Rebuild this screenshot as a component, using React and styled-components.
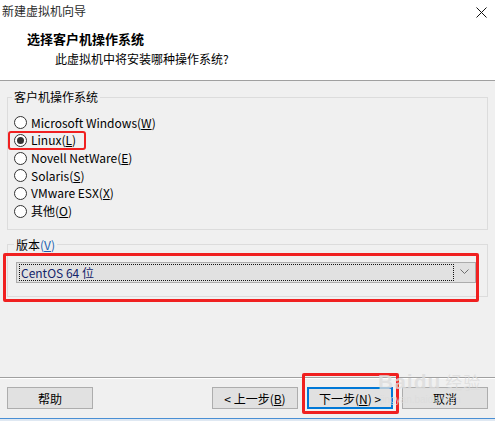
import React from "react";
import styled, { createGlobalStyle } from "styled-components";

const Global = createGlobalStyle`
  html, body { margin: 0; padding: 0; background: #f0f0f0; }
  body { font-family: "Noto Sans CJK SC", "Noto Sans", sans-serif; font-size: 12px; color: #000; }
  * { box-sizing: border-box; }
`;

const Window = styled.div`
  width: 495px;
  height: 421px;
  display: flex;
  flex-direction: column;
  background: #f0f0f0;
  position: relative;
  overflow: hidden;
`;

const Header = styled.div`
  height: 81px;
  background: #fff;
  border-bottom: 1px solid #a0a0a0;
  display: flex;
  flex-direction: column;
`;

const TitleBar = styled.div`
  height: 30px;
  display: flex;
  justify-content: space-between;
  align-items: flex-start;
  padding: 2px 8px 0 2px;
`;

const TitleText = styled.span`
  font-size: 12px;
  line-height: 17px;
  color: #2b2b2b;
`;

const Close = styled.svg`
  margin-top: 5px;
  width: 11px;
  height: 11px;
`;

const HeadTitle = styled.div`
  font-size: 13px;
  font-weight: bold;
  line-height: 18px;
  padding-left: 27px;
`;

const HeadSub = styled.div`
  font-size: 12px;
  line-height: 17px;
  padding-left: 55px;
  margin-top: 2px;
`;

const Content = styled.div`
  padding: 9px 7px 0 7px;
  display: flex;
  flex-direction: column;
  gap: 8px;
`;

const Group = styled.fieldset`
  margin: 0;
  border: 1px solid #dcdcdc;
  padding: ${(p) => p.$pad};
  min-width: 0;
  position: relative;
`;

const Legend = styled.legend`
  font-size: 12px;
  line-height: 14px;
  padding: 0 2px;
  margin-left: -2px;
`;

const Accel = styled.span`
  color: ${(p) => p.$color || "inherit"};
  u { text-decoration: underline; }
`;

const RadioList = styled.div`
  display: flex;
  flex-direction: column;
  align-items: flex-start;
`;

const RadioRow = styled.label`
  display: inline-flex;
  align-items: center;
  gap: 4px;
  height: 17.66px;
  line-height: 16px;
  position: relative;
  ${(p) =>
    p.$mark &&
    `&::after {
      content: "";
      position: absolute;
      left: -6px; right: -10px; top: -1px; bottom: -1px;
      border: 2.5px solid #f02020;
      border-radius: 3px;
    }`}
`;

const RadioDot = styled.span`
  width: 13px;
  height: 13px;
  border-radius: 50%;
  border: 1px solid #333;
  background: #fff;
  display: flex;
  align-items: center;
  justify-content: center;
  &::before {
    content: "";
    width: 7px;
    height: 7px;
    border-radius: 50%;
    background: ${(p) => (p.$on ? "#333" : "transparent")};
  }
`;

const Combo = styled.div`
  height: 21px;
  border: 1px solid #acacac;
  background: #e1e1e1;
  display: flex;
  align-items: center;
  padding: 1px 3px 1px 2px;
  gap: 6px;
`;

const ComboValue = styled.div`
  flex: 1;
  height: 17px;
  border: 1px dotted #111;
  line-height: 15px;
  padding-left: 1px;
  color: #14246a;
`;

const Chevron = styled.svg`
  width: 9px;
  height: 6px;
  margin-right: 3px;
`;

const Mark = styled.div`
  position: absolute;
  left: -5px;
  right: 8px;
  top: 1px;
  bottom: -6px;
  border: 3px solid #f02020;
  border-radius: 2px;
  pointer-events: none;
`;

const Footer = styled.div`
  margin-top: auto;
  border-top: 1px solid #a0a0a0;
  box-shadow: inset 0 1px 0 #fff;
  height: 41px;
  padding: 9px 7px 0 7px;
  display: flex;
  align-items: flex-start;
`;

const Btn = styled.div`
  width: 86px;
  height: 22px;
  background: #e1e1e1;
  border: ${(p) => (p.$primary ? "2px solid #0078d7" : "1px solid #adadad")};
  display: flex;
  align-items: center;
  justify-content: center;
  font-size: 12px;
  margin-left: ${(p) => p.$ml || 0}px;
  position: relative;
  white-space: pre;
  u { text-decoration: underline; }
`;

const BtnMark = styled.div`
  position: absolute;
  left: -7px;
  right: -8px;
  top: -16px;
  bottom: -7px;
  border: 3px solid #f02020;
  border-radius: 2px;
`;

const BottomStrip = styled.div`
  height: 3px;
  border-top: 1px solid #4a8fd4;
  background: #dfe8f2;
`;

const Watermark = styled.div`
  position: absolute;
  left: 378px;
  top: 370px;
  display: flex;
  flex-direction: column;
  align-items: flex-start;
  color: rgba(220, 220, 220, 0.8);
  pointer-events: none;
`;

const WmMain = styled.div`
  font-family: "Liberation Sans", sans-serif;
  font-size: 21px;
  font-weight: bold;
  line-height: 24px;
  letter-spacing: 1px;
  display: flex;
  align-items: center;
  gap: 2px;
`;

const WmSub = styled.div`
  font-family: "Liberation Sans", sans-serif;
  font-size: 10px;
  line-height: 12px;
  margin-left: 2px;
`;

const WmCjk = styled.span`
  font-family: "Noto Sans CJK SC", sans-serif;
  font-size: 17px;
  font-weight: normal;
  margin-left: 2px;
`;

const radios = [
  { pre: "Microsoft Windows(", k: "W" },
  { pre: "Linux(", k: "L", on: true, mark: true },
  { pre: "Novell NetWare(", k: "E" },
  { pre: "Solaris(", k: "S" },
  { pre: "VMware ESX(", k: "X" },
  { pre: "其他(", k: "O" },
];

export default function App() {
  return (
    <>
      <Global />
      <Window>
        <Header>
          <TitleBar>
            <TitleText>新建虚拟机向导</TitleText>
            <Close viewBox="0 0 11 11">
              <path d="M0.5 0.5 L10.5 10.5 M10.5 0.5 L0.5 10.5" stroke="#111" strokeWidth="1" />
            </Close>
          </TitleBar>
          <HeadTitle>选择客户机操作系统</HeadTitle>
          <HeadSub>此虚拟机中将安装哪种操作系统?</HeadSub>
        </Header>
        <Content>
          <Group $pad="10px 6px 9px 6px">
            <Legend>客户机操作系统</Legend>
            <RadioList>
              {radios.map((r) => (
                <RadioRow key={r.k} $mark={r.mark}>
                  <RadioDot $on={r.on} />
                  <span>
                    {r.pre}
                    <u>{r.k}</u>)
                  </span>
                </RadioRow>
              ))}
            </RadioList>
          </Group>
          <Group $pad="10px 11px 13px 8px">
            <Legend>
              版本<Accel $color="#2060b0">(<u>V</u>)</Accel>
            </Legend>
            <Combo>
              <ComboValue>CentOS 64 位</ComboValue>
              <Chevron viewBox="0 0 9 6">
                <path d="M0.5 0.5 L4.5 4.5 L8.5 0.5" fill="none" stroke="#6d6d6d" strokeWidth="1" />
              </Chevron>
            </Combo>
            <Mark />
          </Group>
        </Content>
        <Footer>
          <Btn>帮助</Btn>
          <Btn $ml={119}>
            {"< 上一步("}<u>B</u>)
          </Btn>
          <Btn $ml={9} $primary>
            {"下一步("}<u>N</u>{") >"}
            <BtnMark />
          </Btn>
          <Btn $ml={9}>取消</Btn>
        </Footer>
        <BottomStrip />
        <Watermark>
          <WmMain>
            Baidu<WmCjk>经验</WmCjk>
          </WmMain>
          <WmSub>jingyan.baidu.com</WmSub>
        </Watermark>
      </Window>
    </>
  );
}
